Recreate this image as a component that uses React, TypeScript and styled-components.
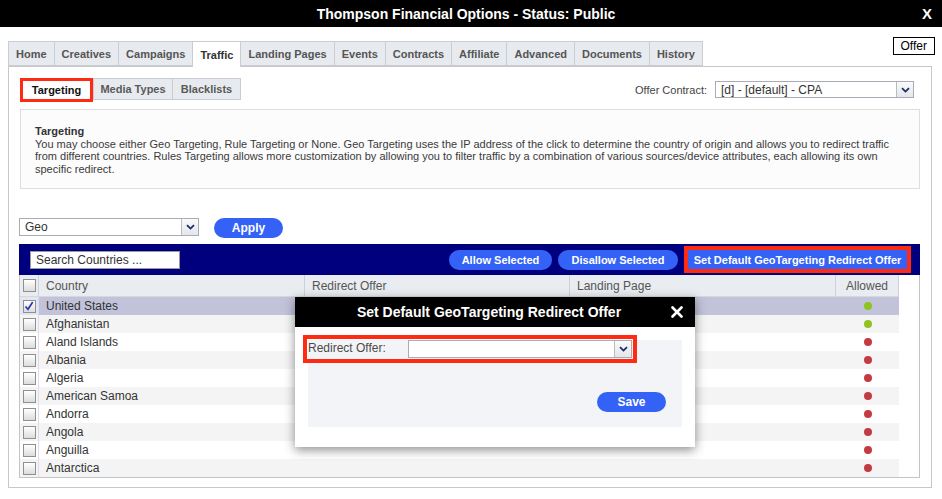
import React from "react";
import styled, { createGlobalStyle } from "styled-components";

const GlobalStyle = createGlobalStyle`
  html, body { margin: 0; padding: 0; background: #fff; }
  body {
    font-family: "Liberation Sans", Arial, Helvetica, sans-serif;
    width: 942px; height: 499px; overflow: hidden; color: #333;
  }
  * { box-sizing: border-box; }
`;

const Page = styled.div`
  position: relative;
  width: 942px;
  height: 499px;
`;

const TitleBar = styled.header`
  height: 27px;
  background: #000;
  color: #fff;
  display: grid;
  grid-template-columns: 1fr auto 1fr;
  align-items: center;
  font-weight: bold;
  font-size: 14px;
  padding: 0 10px 0 0;
`;

const TitleText = styled.div`
  grid-column: 2;
`;

const CloseX = styled.div`
  grid-column: 3;
  justify-self: end;
  font-size: 15px;
  font-weight: bold;
`;

const TopRow = styled.div`
  display: flex;
  justify-content: space-between;
  align-items: flex-start;
  margin: 10px 0 0 8px;
  width: 927px;
  height: 29px;
`;

const Tabs = styled.nav`
  display: flex;
  align-items: flex-start;
  margin-top: 4px;
  position: relative;
  z-index: 1;
`;

const Tab = styled.div<{ $active?: boolean }>`
  height: ${(p) => (p.$active ? 26 : 25)}px;
  padding: 0 7px;
  display: flex;
  align-items: center;
  border: 1px solid #c9cdd3;
  border-bottom: ${(p) => (p.$active ? "none" : "1px solid #c9cdd3")};
  margin-left: -1px;
  background: ${(p) => (p.$active ? "#fff" : "#e7eaee")};
  color: ${(p) => (p.$active ? "#333" : "#555")};
  font-size: 11px;
  font-weight: bold;
  white-space: nowrap;
  &:first-child { margin-left: 0; }
`;

const OfferBox = styled.div`
  height: 18px;
  border: 1px solid #000;
  padding: 0 7px;
  font-size: 12px;
  line-height: 16px;
  color: #000;
`;

const Panel = styled.section`
  margin-left: 8px;
  width: 924px;
  height: 422px;
  border: 1px solid #c8c8c8;
  padding: 0 11px 0 10px;
`;

const SubRow = styled.div`
  margin-top: 11px;
  height: 24px;
  display: flex;
  justify-content: space-between;
  align-items: flex-start;
`;

const SubTabs = styled.div`
  display: flex;
  align-items: flex-start;
  margin-left: 1px;
`;

const SubTab = styled.div<{ $active?: boolean; $w: number }>`
  width: ${(p) => p.$w}px;
  height: ${(p) => (p.$active ? 24 : 22)}px;
  display: flex;
  align-items: center;
  justify-content: center;
  font-size: 11px;
  font-weight: bold;
  background: ${(p) => (p.$active ? "#fff" : "#e7eaee")};
  color: ${(p) => (p.$active ? "#111" : "#5a5a5a")};
  border: ${(p) => (p.$active ? "3px solid #ff2a12" : "1px solid #c9cdd3")};
  margin-left: ${(p) => (p.$active ? 0 : -1)}px;
  &:nth-child(2) { margin-left: 0; }
`;

const ContractGroup = styled.div`
  display: flex;
  align-items: center;
  gap: 8px;
  margin-top: 3px;
  margin-right: 6px;
`;

const FieldLabel = styled.span`
  font-size: 11px;
  color: #444;
`;

const SelectBox = styled.div<{ $w: number; $h: number }>`
  width: ${(p) => p.$w}px;
  height: ${(p) => p.$h}px;
  border: 1px solid #a9acb6;
  background: #fff;
  display: flex;
`;

const SelectValue = styled.div`
  flex: 1;
  font-size: 12px;
  color: #333;
  padding-left: 5px;
  display: flex;
  align-items: center;
  white-space: nowrap;
`;

const SelectArrow = styled.div`
  width: 17px;
  border-left: 1px solid #b9bcc4;
  background: linear-gradient(#fafafa, #e4e6ea);
  display: flex;
  align-items: center;
  justify-content: center;
`;

const DescBox = styled.div`
  margin: 7px 0 0 1px;
  width: 900px;
  height: 80px;
  border: 1px solid #dedede;
  background: #fcfcfd;
  padding: 15px 10px 0 14px;
  font-size: 11px;
  line-height: 12.5px;
  color: #3a3a3a;
  white-space: nowrap;
`;

const DescTitle = styled.div`
  font-weight: bold;
  color: #333;
`;

const GeoRow = styled.div`
  margin-top: 29px;
  height: 20px;
  display: flex;
  align-items: flex-start;
  gap: 15px;
`;

const PillButton = styled.button<{ $w: number }>`
  width: ${(p) => p.$w}px;
  height: 20px;
  border: none;
  border-radius: 10px;
  background: #3462f6;
  color: #fff;
  font-family: inherit;
  font-size: 11px;
  font-weight: bold;
  padding: 0;
  cursor: pointer;
`;

const ApplyButton = styled(PillButton)`
  font-size: 12px;
`;

const TableBox = styled.div`
  margin-top: 6px;
  width: 901px;
`;

const NavBar = styled.div`
  height: 31px;
  background: #00007f;
  display: flex;
  align-items: center;
  padding: 0 9px 0 11px;
`;

const SearchInput = styled.input`
  width: 150px;
  height: 18px;
  border: 1px solid #9a9a9a;
  background: #fff;
  font-family: inherit;
  font-size: 12px;
  padding: 0 0 0 5px;
  color: #333;
  outline: none;
  &::placeholder { color: #333; }
`;

const BarButtons = styled.div`
  margin-left: auto;
  display: flex;
  align-items: center;
  gap: 6px;
`;

const HighlightButton = styled.button`
  width: 227px;
  height: 27px;
  border: 4px solid #ff2a12;
  background: #3462f6;
  color: #fff;
  font-family: inherit;
  font-size: 11px;
  font-weight: bold;
  padding: 0;
`;

const GridWrap = styled.div`
  border: 1px solid #c4c4c4;
  border-top: none;
  width: 901px;
`;

const GridRow = styled.div<{ $bg: string; $h: number }>`
  width: 879px;
  height: ${(p) => p.$h}px;
  display: grid;
  grid-template-columns: 19px 266px 265px 266px 63px;
  background: ${(p) => p.$bg};
  font-size: 12px;
`;

const HeadCell = styled.div<{ $center?: boolean }>`
  display: flex;
  align-items: center;
  justify-content: ${(p) => (p.$center ? "center" : "flex-start")};
  padding-left: ${(p) => (p.$center ? 0 : 7)}px;
  color: #555;
  border-right: 1px solid #cfd1d6;
  border-bottom: 1px solid #d6d8dc;
`;

const CheckCell = styled.div<{ $sel?: boolean }>`
  display: flex;
  align-items: center;
  justify-content: center;
  border-right: 1px solid #dcdde2;
  background: ${(p) => (p.$sel ? "#e2e6f2" : "transparent")};
`;

const Cell = styled.div`
  display: flex;
  align-items: center;
  padding-left: 7px;
  color: #333;
  white-space: nowrap;
`;

const DotCell = styled.div`
  display: flex;
  align-items: center;
  justify-content: center;
`;

const Dot = styled.span<{ $on: boolean }>`
  width: 8px;
  height: 8px;
  border-radius: 50%;
  background: ${(p) => (p.$on ? "#8fc31f" : "#c43a43")};
`;

const Check = styled.span`
  width: 13px;
  height: 13px;
  border: 1px solid #8f8f8f;
  background: linear-gradient(#ffffff, #dcdcdc);
  display: flex;
  align-items: center;
  justify-content: center;
`;

const Modal = styled.div`
  position: absolute;
  left: 295px;
  top: 297px;
  width: 400px;
  height: 150px;
  background: #fff;
  box-shadow: 0 3px 10px rgba(0, 0, 0, 0.45);
  z-index: 10;
`;

const ModalHead = styled.div`
  height: 30px;
  background: #000;
  color: #fff;
  display: grid;
  grid-template-columns: 1fr auto 1fr;
  align-items: center;
  font-size: 14px;
  font-weight: bold;
  padding-right: 12px;
`;

const ModalBody = styled.div`
  padding: 13px 13px 20px 13px;
`;

const ModalPanel = styled.div`
  height: 87px;
  background: #f3f4f8;
  display: flex;
  flex-direction: column;
`;

const FieldRow = styled.div`
  margin: -5px 0 0 -5px;
  width: 334px;
  height: 28px;
  border: 4px solid #ff2a12;
  padding: 1px;
  display: flex;
  align-items: flex-start;
`;

const ModalLabel = styled.div`
  width: 100px;
  font-size: 12px;
  color: #4a4a4a;
  padding-top: 1px;
`;

const SaveRow = styled.div`
  margin-top: auto;
  display: flex;
  justify-content: flex-end;
  padding: 0 16px 15px 0;
`;

const SaveButton = styled(PillButton)`
  font-size: 12px;
`;

const Chevron = () => (
  <svg width="9" height="6" viewBox="0 0 9 6">
    <path d="M1 1.2 L4.5 4.6 L8 1.2" fill="none" stroke="#1d2a6b" strokeWidth="1.8" />
  </svg>
);

const Select = ({ w, h, value }: { w: number; h: number; value?: string }) => (
  <SelectBox $w={w} $h={h}>
    <SelectValue>{value}</SelectValue>
    <SelectArrow>
      <Chevron />
    </SelectArrow>
  </SelectBox>
);

const CheckBox = ({ checked }: { checked?: boolean }) => (
  <Check>
    {checked && (
      <svg width="10" height="10" viewBox="0 0 10 10">
        <path d="M1.5 5.5 L4 8.3 L8.7 1" fill="none" stroke="#2a3fa8" strokeWidth="1.8" />
      </svg>
    )}
  </Check>
);

const tabs = [
  "Home",
  "Creatives",
  "Campaigns",
  "Traffic",
  "Landing Pages",
  "Events",
  "Contracts",
  "Affiliate",
  "Advanced",
  "Documents",
  "History",
];

const countries: { name: string; on: boolean }[] = [
  { name: "United States", on: true },
  { name: "Afghanistan", on: true },
  { name: "Aland Islands", on: false },
  { name: "Albania", on: false },
  { name: "Algeria", on: false },
  { name: "American Samoa", on: false },
  { name: "Andorra", on: false },
  { name: "Angola", on: false },
  { name: "Anguilla", on: false },
  { name: "Antarctica", on: false },
];

export default function App() {
  return (
    <Page>
      <GlobalStyle />
      <TitleBar>
        <TitleText>Thompson Financial Options - Status: Public</TitleText>
        <CloseX>X</CloseX>
      </TitleBar>

      <TopRow>
        <Tabs>
          {tabs.map((t) => (
            <Tab key={t} $active={t === "Traffic"}>
              {t}
            </Tab>
          ))}
        </Tabs>
        <OfferBox>Offer</OfferBox>
      </TopRow>

      <Panel>
        <SubRow>
          <SubTabs>
            <SubTab $active $w={73}>Targeting</SubTab>
            <SubTab $w={80}>Media Types</SubTab>
            <SubTab $w={69}>Blacklists</SubTab>
          </SubTabs>
          <ContractGroup>
            <FieldLabel>Offer Contract:</FieldLabel>
            <Select w={199} h={17} value="[d] - [default] - CPA" />
          </ContractGroup>
        </SubRow>

        <DescBox>
          <DescTitle>Targeting</DescTitle>
          You may choose either Geo Targeting, Rule Targeting or None. Geo Targeting uses the IP address of the click to determine the country of origin and allows you to redirect traffic
          <br />
          from different countries. Rules Targeting allows more customization by allowing you to filter traffic by a combination of various sources/device attributes, each allowing its own
          <br />
          specific redirect.
        </DescBox>

        <GeoRow>
          <Select w={180} h={18} value="Geo" />
          <ApplyButton $w={69}>Apply</ApplyButton>
        </GeoRow>

        <TableBox>
          <NavBar>
            <SearchInput placeholder="Search Countries ..." />
            <BarButtons>
              <PillButton $w={103}>Allow Selected</PillButton>
              <PillButton $w={120}>Disallow Selected</PillButton>
              <HighlightButton>Set Default GeoTargeting Redirect Offer</HighlightButton>
            </BarButtons>
          </NavBar>
          <GridWrap>
            <GridRow $bg="#e9ecf0" $h={22}>
              <CheckCell style={{ borderBottom: "1px solid #d6d8dc", borderRight: "1px solid #cfd1d6" }}>
                <CheckBox />
              </CheckCell>
              <HeadCell>Country</HeadCell>
              <HeadCell>Redirect Offer</HeadCell>
              <HeadCell>Landing Page</HeadCell>
              <HeadCell $center>Allowed</HeadCell>
            </GridRow>
            {countries.map((c, i) => (
              <GridRow
                key={c.name}
                $h={18}
                $bg={i === 0 ? "#c2c3da" : i % 2 === 1 ? "#f4f4f5" : "#ffffff"}
              >
                <CheckCell $sel={i === 0}>
                  <CheckBox checked={i === 0} />
                </CheckCell>
                <Cell>{c.name}</Cell>
                <Cell />
                <Cell />
                <DotCell>
                  <Dot $on={c.on} />
                </DotCell>
              </GridRow>
            ))}
          </GridWrap>
        </TableBox>
      </Panel>

      <Modal>
        <ModalHead>
          <TitleText>Set Default GeoTargeting Redirect Offer</TitleText>
          <CloseX>
            <svg width="12" height="12" viewBox="0 0 12 12">
              <path d="M1.5 1.5 L10.5 10.5 M10.5 1.5 L1.5 10.5" stroke="#fff" strokeWidth="2.6" strokeLinecap="round" />
            </svg>
          </CloseX>
        </ModalHead>
        <ModalBody>
          <ModalPanel>
            <FieldRow>
              <ModalLabel>Redirect Offer:</ModalLabel>
              <Select w={224} h={18} />
            </FieldRow>
            <SaveRow>
              <SaveButton $w={69}>Save</SaveButton>
            </SaveRow>
          </ModalPanel>
        </ModalBody>
      </Modal>
    </Page>
  );
}
